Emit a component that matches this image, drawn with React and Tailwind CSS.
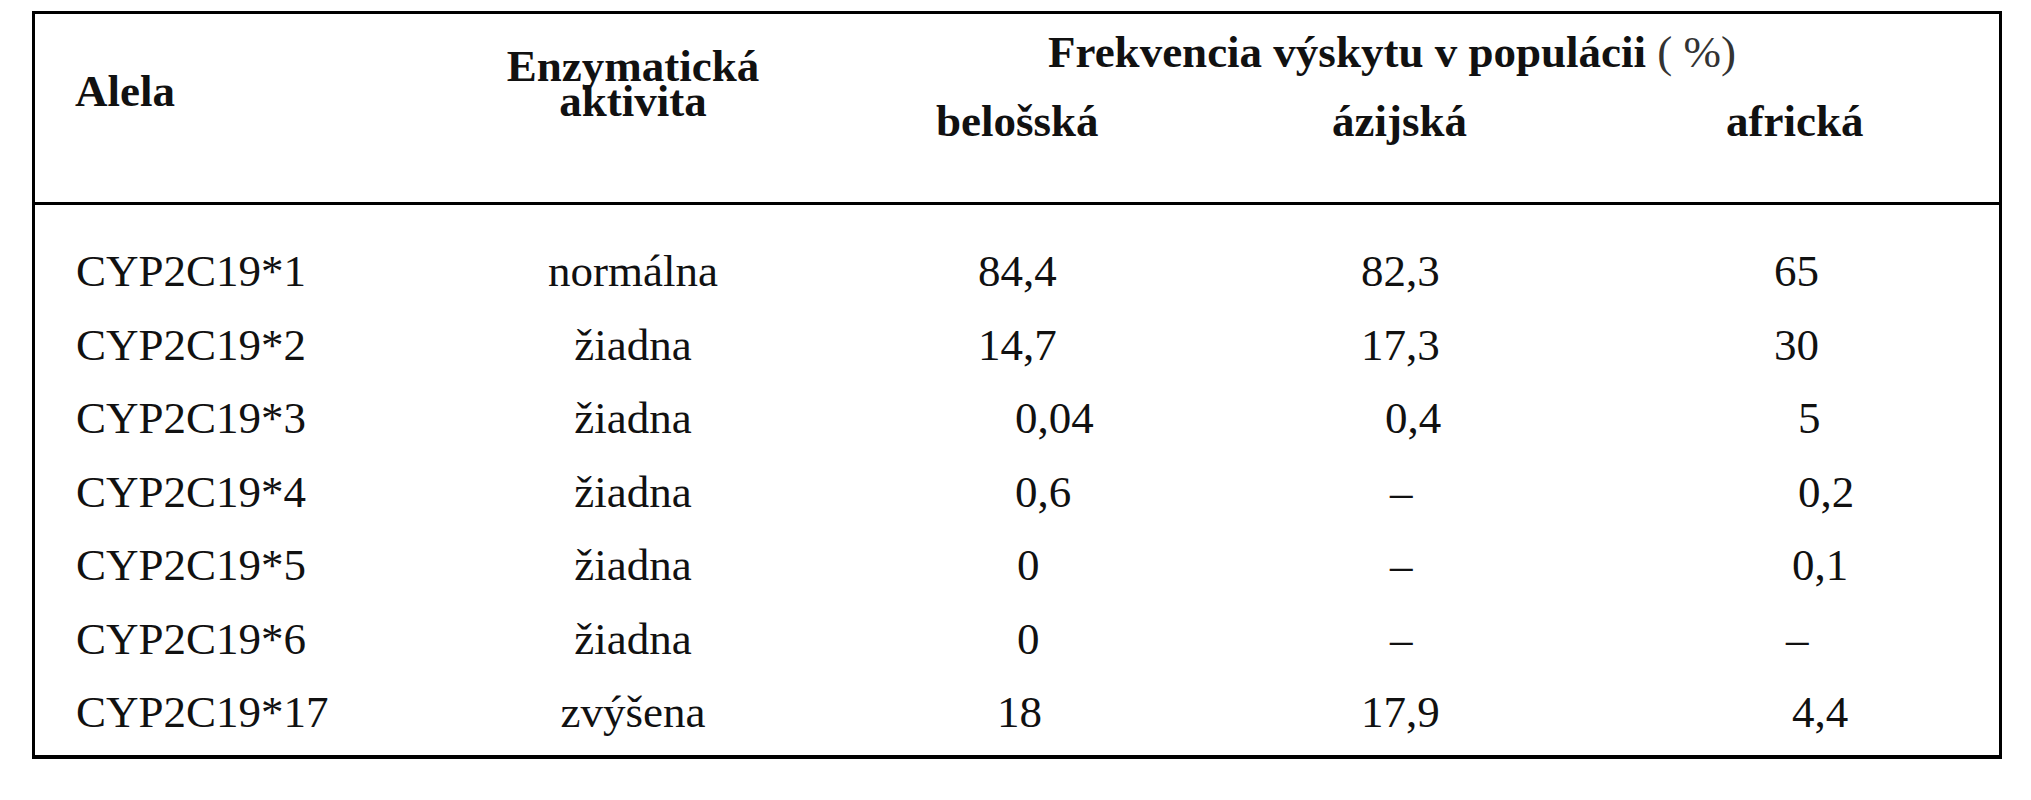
import React from "react";

const rows = [
  ["CYP2C19*1", "normálna", ["84,4", "pl-[192px]"], ["82,3", "pl-[111px]"], ["65", "pl-[124px]"]],
  ["CYP2C19*2", "žiadna", ["14,7", "pl-[192px]"], ["17,3", "pl-[111px]"], ["30", "pl-[124px]"]],
  ["CYP2C19*3", "žiadna", ["0,04", "pl-[229px]"], ["0,4", "pl-[135px]"], ["5", "pl-[148px]"]],
  ["CYP2C19*4", "žiadna", ["0,6", "pl-[229px]"], ["–", "pl-[140px]"], ["0,2", "pl-[148px]"]],
  ["CYP2C19*5", "žiadna", ["0", "pl-[231px]"], ["–", "pl-[140px]"], ["0,1", "pl-[142px]"]],
  ["CYP2C19*6", "žiadna", ["0", "pl-[231px]"], ["–", "pl-[140px]"], ["–", "pl-[136px]"]],
  ["CYP2C19*17", "zvýšena", ["18", "pl-[211px]"], ["17,9", "pl-[111px]"], ["4,4", "pl-[142px]"]],
];

export default function App() {
  return (
    <div
      className="w-[2031px] h-[800px] bg-white pt-[11px] pl-[32px] text-[#111] text-[45px]"
      style={{ fontFamily: '"Liberation Serif", "Times New Roman", serif' }}
    >
      <div className="w-[1970px] h-[748px] border-[3px] border-b-4 border-black box-border">
        {/* Header */}
        <div className="h-[191px] border-b-[3px] border-black flex font-bold leading-[35px]">
          <div className="w-[445px] pl-[40px] pt-[60px]">Alela</div>
          <div className="w-[306px] pt-[35px] text-center">
            <div>Enzymatická</div>
            <div>aktivita</div>
          </div>
          <div className="w-[1213px] flex flex-col">
            <div className="pt-[21px] pl-[262px] whitespace-nowrap">
              Frekvencia výskytu v populácii{" "}
              <span className="font-normal text-[#333]">( %)</span>
            </div>
            <div className="mt-[34px] grid grid-cols-[464px_400px_349px]">
              <div className="pl-[150px]">belošská</div>
              <div className="pl-[82px]">ázijská</div>
              <div className="pl-[76px]">africká</div>
            </div>
          </div>
        </div>
        {/* Body */}
        <div className="pt-[30px] leading-[73.5px]">
          {rows.map((r) => (
            <div key={r[0]} className="grid grid-cols-[445px_306px_464px_400px_349px] whitespace-nowrap">
              <div className="pl-[41px]">{r[0]}</div>
              <div className="text-center">{r[1]}</div>
              <div className={r[2][1]}>{r[2][0]}</div>
              <div className={r[3][1]}>{r[3][0]}</div>
              <div className={r[4][1]}>{r[4][0]}</div>
            </div>
          ))}
        </div>
      </div>
    </div>
  );
}
